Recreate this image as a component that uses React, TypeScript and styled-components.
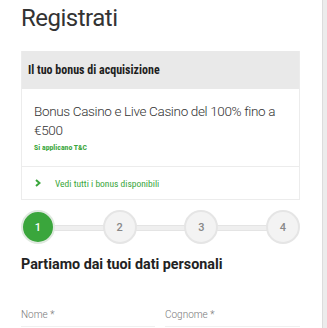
import React from 'react';
import styled, { createGlobalStyle } from 'styled-components';

const GlobalStyle = createGlobalStyle`
  html, body {
    margin: 0;
    padding: 0;
    background: #fff;
    font-family: Roboto, "Liberation Sans", Arial, sans-serif;
    overflow: hidden;
  }
`;

const narrow = `"Roboto Condensed", "Liberation Sans Narrow", Roboto, sans-serif`;

const Page = styled.div`
  display: flex;
  width: 327px;
  height: 328px;
  overflow: hidden;
`;

const Content = styled.main`
  flex: 1;
  padding: 0 22px 0 21px;
`;

const ScrollRail = styled.div`
  width: 4px;
  background: #ececec;
  border-left: 1px solid #dcdcdc;
`;

const Title = styled.h1`
  margin: 0;
  padding-top: 2px;
  height: 49px;
  font-size: 24px;
  font-weight: 400;
  letter-spacing: -0.5px;
  color: #333;
  line-height: 32px;
`;

const BonusCard = styled.section`
  border: 1px solid #ececec;
  border-top: none;
`;

const CardHeader = styled.div`
  background: #e9e9e9;
  height: 38px;
  display: flex;
  align-items: center;
  padding-left: 6px;
  font-family: ${narrow};
  font-size: 12px;
  font-weight: 700;
  color: #1e1e1e;
`;

const CardBody = styled.div`
  padding: 13px 12px 14px;
  border-bottom: 1px solid #ececec;
`;

const BonusText = styled.p`
  margin: 0;
  font-size: 13.5px;
  font-weight: 300;
  letter-spacing: -0.35px;
  line-height: 19px;
  color: #333;
`;

const Terms = styled.div`
  margin-top: 3px;
  font-family: ${narrow};
  font-size: 7.8px;
  font-weight: 700;
  color: #3aa63c;
`;

const MoreLink = styled.a`
  display: flex;
  align-items: center;
  height: 32px;
  padding-left: 13px;
  gap: 14px;
  font-family: ${narrow};
  font-size: 9.5px;
  font-weight: 400;
  color: #3aa63c;
  text-decoration: none;
`;

const Stepper = styled.ol`
  list-style: none;
  margin: 10px 0 0;
  padding: 0;
  display: flex;
  align-items: center;
  justify-content: space-between;
  position: relative;
`;

const Track = styled.div`
  position: absolute;
  left: 16px;
  right: 16px;
  top: 50%;
  height: 4px;
  margin-top: -2px;
  background: #efefef;
  border-top: 1px solid #e4e4e4;
  border-bottom: 1px solid #e4e4e4;
`;

const Step = styled.li<{ $active?: boolean }>`
  position: relative;
  z-index: 1;
  width: 30px;
  height: 30px;
  border-radius: 50%;
  display: flex;
  align-items: center;
  justify-content: center;
  font-size: 11px;
  font-weight: 500;
  color: ${p => (p.$active ? '#fff' : '#888')};
  background: ${p => (p.$active ? '#3aa63c' : '#f3f3f3')};
  border: 2px solid ${p => (p.$active ? '#dfe9df' : '#e5e5e5')};
`;

const SectionTitle = styled.h2`
  margin: 10px 0 0;
  font-size: 14.3px;
  font-weight: 700;
  color: #222;
  line-height: 20px;
`;

const FieldRow = styled.div`
  display: grid;
  grid-template-columns: 134px 1fr;
  gap: 10px;
  margin-top: 35px;
`;

const Field = styled.label`
  display: block;
  font-size: 10px;
  font-weight: 300;
  color: #777;
  padding-bottom: 6px;
  border-bottom: 1px solid #f0f0f0;
`;

const Chevron = () => (
  <svg width="6" height="8" viewBox="0 0 6 8">
    <path d="M1 1 L4.5 4 L1 7" fill="none" stroke="#3aa63c" strokeWidth="2" />
  </svg>
);

const App: React.FC = () => (
  <Page>
    <GlobalStyle />
    <Content>
      <Title>Registrati</Title>
      <BonusCard>
        <CardHeader>Il tuo bonus di acquisizione</CardHeader>
        <CardBody>
          <BonusText>Bonus Casino e Live Casino del 100% fino a €500</BonusText>
          <Terms>Si applicano T&amp;C</Terms>
        </CardBody>
        <MoreLink href="#">
          <Chevron />
          Vedi tutti i bonus disponibili
        </MoreLink>
      </BonusCard>
      <Stepper>
        <Track />
        <Step $active>1</Step>
        <Step>2</Step>
        <Step>3</Step>
        <Step>4</Step>
      </Stepper>
      <SectionTitle>Partiamo dai tuoi dati personali</SectionTitle>
      <FieldRow>
        <Field>Nome *</Field>
        <Field>Cognome *</Field>
      </FieldRow>
    </Content>
    <ScrollRail />
  </Page>
);

export default App;
